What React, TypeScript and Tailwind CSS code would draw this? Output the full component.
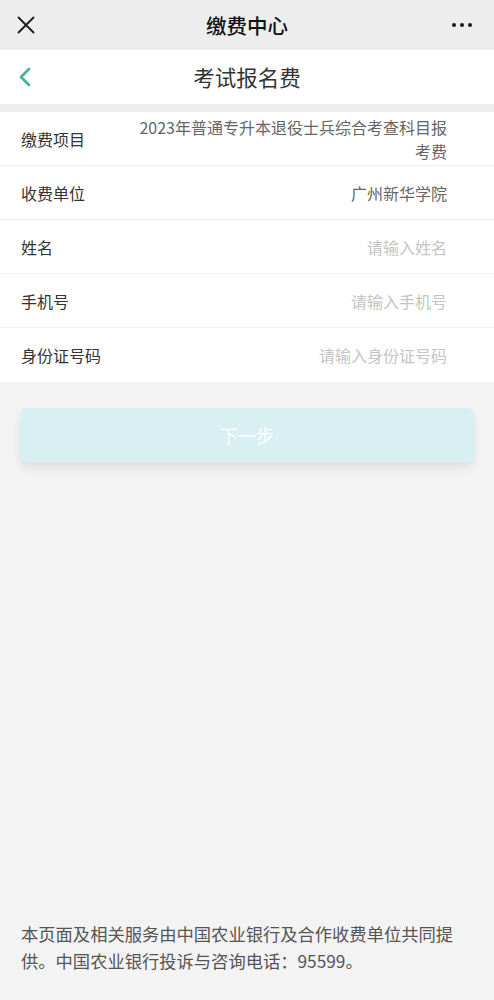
import React from "react";

const font = { fontFamily: '"Noto Sans CJK SC", "Noto Sans", sans-serif' };

function Row({ label, value, placeholder }: { label: string; value?: React.ReactNode; placeholder?: string }) {
  return (
    <div className="flex items-center justify-between pl-[21px] pr-[47px] h-[54px] border-b border-[#f0f0f0]">
      <div className="text-[16px] text-[#333] shrink-0">{label}</div>
      {value ? (
        <div className="text-[16px] text-[#666] text-right leading-[22px]">{value}</div>
      ) : (
        <div className="text-[16px] text-[#c4c4c4] text-right">{placeholder}</div>
      )}
    </div>
  );
}

export default function App() {
  return (
    <div className="w-[494px] h-[1000px] bg-[#f3f3f3] flex flex-col" style={font}>
      <div className="h-[50px] bg-[#ededed] flex items-center justify-between px-[16px] relative">
        <svg width="18" height="18" viewBox="0 0 18 18" className="ml-[1px]">
          <path d="M1.5 1.5 L16.5 16.5 M16.5 1.5 L1.5 16.5" stroke="#1a1a1a" strokeWidth="1.8" strokeLinecap="round" />
        </svg>
        <div className="absolute left-0 right-0 text-center text-[20.5px] font-medium text-[#111] pointer-events-none">缴费中心</div>
        <div className="flex gap-[4px] mr-[6px]">
          <span className="w-[4px] h-[4px] rounded-full bg-[#1a1a1a]" />
          <span className="w-[4px] h-[4px] rounded-full bg-[#1a1a1a]" />
          <span className="w-[4px] h-[4px] rounded-full bg-[#1a1a1a]" />
        </div>
      </div>
      <div className="h-[54px] bg-white flex items-center relative">
        <svg width="14" height="20" viewBox="0 0 14 20" className="ml-[18px]">
          <path d="M11 2 L3 10 L11 18" stroke="#3fb2a0" strokeWidth="2.6" fill="none" strokeLinecap="round" strokeLinejoin="round" />
        </svg>
        <div className="absolute left-0 right-0 text-center text-[21.5px] text-[#333]">考试报名费</div>
      </div>
      <div className="h-[8px] bg-[#eeeeee]" />
      <div className="bg-white">
        <Row
          label="缴费项目"
          value={<div className="w-[310px] leading-[24px]">2023年普通专升本退役士兵综合考查科目报考费</div>}
        />
        <Row label="收费单位" value="广州新华学院" />
        <Row label="姓名" placeholder="请输入姓名" />
        <Row label="手机号" placeholder="请输入手机号" />
        <div className="flex items-center justify-between pl-[21px] pr-[47px] h-[54px]">
          <div className="text-[16px] text-[#333]">身份证号码</div>
          <div className="text-[16px] text-[#c4c4c4]">请输入身份证号码</div>
        </div>
      </div>
      <div className="px-[20px] pt-[26px]">
        <div className="h-[54px] rounded-[6px] bg-[#d8f0f1] shadow-[0_6px_10px_rgba(0,0,0,0.08)] flex items-center justify-center text-[18px] text-white">
          下一步
        </div>
      </div>
      <div className="flex-1" />
      <div className="px-[21px] pb-[26px] text-[17.3px] leading-[27px] text-[#555]">
        本页面及相关服务由中国农业银行及合作收费单位共同提供。中国农业银行投诉与咨询电话：95599。
      </div>
    </div>
  );
}
